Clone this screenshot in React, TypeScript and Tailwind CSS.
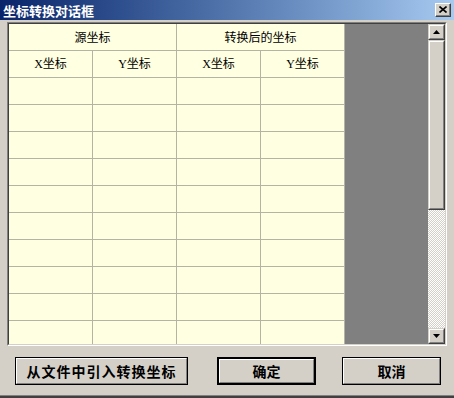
import React from "react";

const cjk = { fontFamily: '"Noto Sans CJK SC", "Noto Sans", sans-serif' };
const hdr = { fontFamily: '"Liberation Serif", "Noto Sans CJK SC", serif' };

function Arrow({ up }: { up: boolean }) {
  return (
    <div className="w-[17px] h-[16px] border-t border-l border-[#d4d0c8] border-b border-r border-b-[#404040] border-r-[#404040] bg-[#d4d0c8]">
      <div className="w-full h-full border-t border-l border-white border-b border-r border-b-[#808080] border-r-[#808080] flex items-center justify-center">
        <svg width="7" height="4" viewBox="0 0 7 4">
          {up ? (
            <polygon points="3.5,0 7,4 0,4" fill="#000" />
          ) : (
            <polygon points="0,0 7,0 3.5,4" fill="#000" />
          )}
        </svg>
      </div>
    </div>
  );
}

function Btn({ label, w, def, track }: { label: string; w: string; def?: boolean; track?: boolean }) {
  return (
    <div className={`${w} h-[28px] ${def ? "border-2" : "border"} border-black bg-[#d4d0c8]`}>
      <div className="w-full h-full border-t border-l border-white border-b border-r border-b-[#808080] border-r-[#808080] flex items-center justify-center">
        <span
          className={`text-[14px] font-bold text-black leading-none ${track ? "tracking-[1px]" : ""}`}
          style={cjk}
        >
          {label}
        </span>
      </div>
    </div>
  );
}

export default function App() {
  const dataRows = Array.from({ length: 10 });
  return (
    <div className="w-[454px] h-[398px] bg-[#d4d0c8] flex flex-col overflow-hidden">
      {/* title bar */}
      <div className="h-[20px] shrink-0 bg-gradient-to-r from-[#0a246a] to-[#a6caf0] flex items-center justify-between pl-[3px] pr-[3px]">
        <span className="text-white font-bold text-[13px] leading-none" style={cjk}>
          坐标转换对话框
        </span>
        <div className="w-[16px] h-[14px] border-t border-l border-white border-b border-r border-b-[#404040] border-r-[#404040] bg-[#d4d0c8]">
          <div className="w-full h-full border-b border-r border-[#808080] flex items-center justify-center">
            <svg width="8" height="7" viewBox="0 0 8 7">
              <path d="M0.5 0.5 L7.5 6.5 M7.5 0.5 L0.5 6.5" stroke="#000" strokeWidth="1.6" />
            </svg>
          </div>
        </div>
      </div>

      {/* grid frame */}
      <div className="ml-[7px] mt-[2px] w-[440px] h-[324px] border-t border-l border-[#808080] border-b border-r border-b-white border-r-white">
        <div className="w-full h-full border-t border-l border-[#404040] border-b border-r border-b-[#d4d0c8] border-r-[#d4d0c8] flex">
          <div className="w-[419px] h-[320px] flex">
            <div className="w-[336px] h-full bg-[#ffffe1] overflow-hidden flex flex-col">
              <div className="h-[27px] shrink-0 flex border-b border-[#b5b3a4]">
                <div className="w-[168px] border-r border-[#b5b3a4] flex items-center justify-center text-[12px] text-black" style={cjk}>
                  源坐标
                </div>
                <div className="w-[168px] border-r border-[#b5b3a4] flex items-center justify-center text-[12px] text-black" style={cjk}>
                  转换后的坐标
                </div>
              </div>
              <div className="h-[27px] shrink-0 flex border-b border-[#b5b3a4]">
                {["X坐标", "Y坐标", "X坐标", "Y坐标"].map((t, i) => (
                  <div key={i} className="w-[84px] border-r border-[#b5b3a4] flex items-center justify-center text-[12px] text-black" style={hdr}>
                    {t}
                  </div>
                ))}
              </div>
              {dataRows.map((_, r) => (
                <div key={r} className="h-[27px] shrink-0 flex border-b border-[#b5b3a4]">
                  {[0, 1, 2, 3].map((c) => (
                    <div key={c} className="w-[84px] border-r border-[#b5b3a4]" />
                  ))}
                </div>
              ))}
            </div>
            <div className="flex-1 h-full bg-[#808080]" />
          </div>
          {/* scrollbar */}
          <div className="w-[17px] h-[320px] flex flex-col">
            <Arrow up />
            <div className="h-[170px] w-[17px] border-t border-l border-[#d4d0c8] border-b border-r border-b-[#404040] border-r-[#404040] bg-[#d4d0c8]">
              <div className="w-full h-full border-t border-l border-white border-b border-r border-b-[#808080] border-r-[#808080]" />
            </div>
            <div className="flex-1 bg-[repeating-conic-gradient(#d4d0c8_0_25%,#ffffff_0_50%)] bg-[length:2px_2px]" />
            <Arrow up={false} />
          </div>
        </div>
      </div>

      {/* buttons */}
      <div className="mt-[11px] flex">
        <div className="ml-[15px]">
          <Btn label="从文件中引入转换坐标" w="w-[173px]" track />
        </div>
        <div className="ml-[29px]">
          <Btn label="确定" w="w-[99px]" def />
        </div>
        <div className="ml-[26px]">
          <Btn label="取消" w="w-[99px]" />
        </div>
      </div>

      <div className="mt-auto h-px bg-[#808080]" />
      <div className="h-[2px] bg-[#404040]" />
    </div>
  );
}
